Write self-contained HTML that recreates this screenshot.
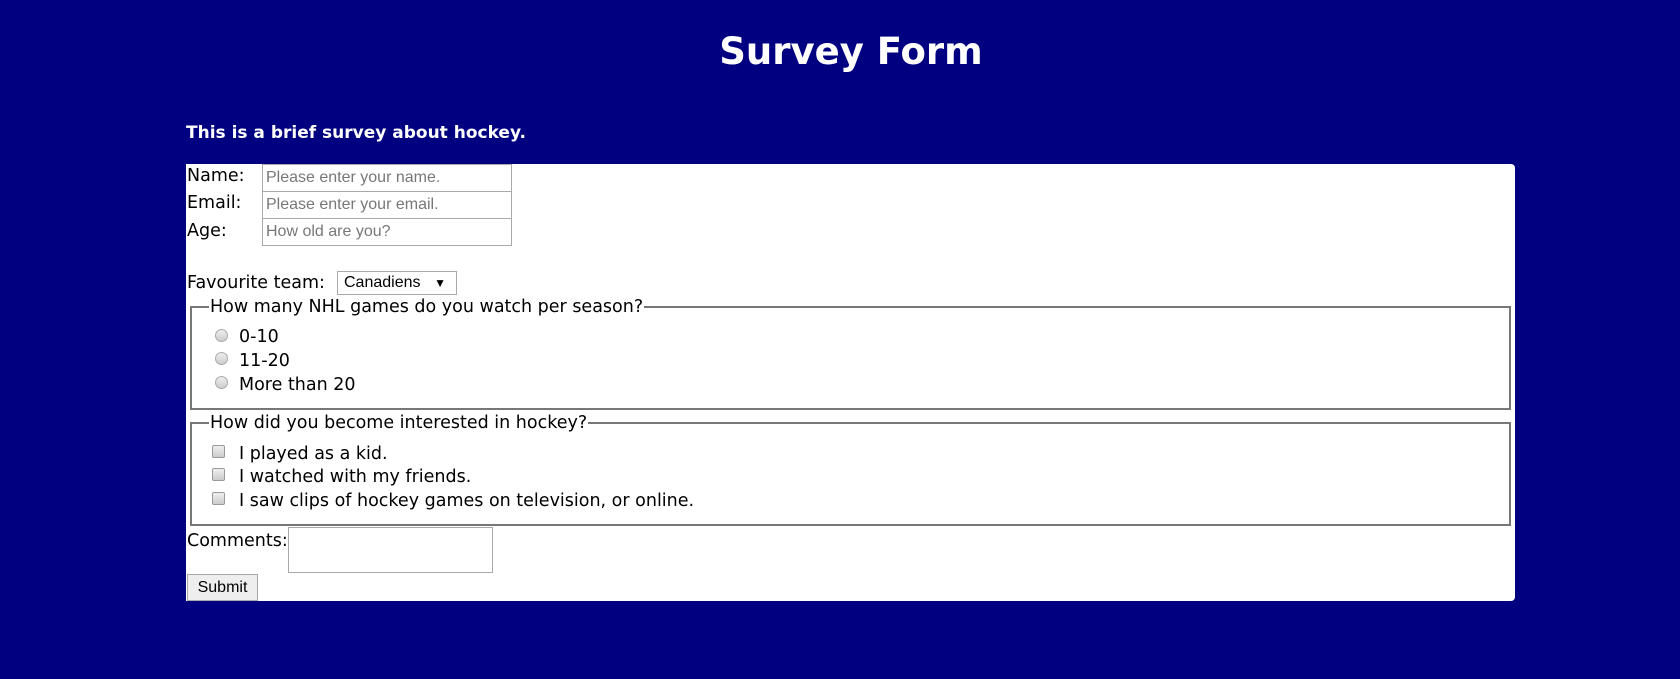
<!DOCTYPE html>
<html><head><style>
body{margin:0;background:#000080;width:1680px;height:679px;position:relative;overflow:hidden;font-family:"DejaVu Sans","Liberation Sans",sans-serif;}
.a{position:absolute;white-space:nowrap;}
h1{position:absolute;left:0;width:1702px;text-align:center;top:30px;margin:0;color:#fff;font-size:37px;font-weight:bold;}
.t{font-size:17.5px;color:#000;}
.inp{position:absolute;border:1px solid #a9a9a9;background:#fff;font-family:"Liberation Sans",sans-serif;font-size:16px;color:#777;box-sizing:border-box;padding:4px 3px;}
.fs{position:absolute;border:2px solid #777;box-sizing:border-box;}
.rad{position:absolute;width:13px;height:13px;border-radius:50%;border:1px solid #aaa;background:linear-gradient(#eee,#ccc);box-sizing:border-box;}
.chk{position:absolute;width:13px;height:13px;border-radius:2px;border:1px solid #999;background:linear-gradient(#eee,#ccc);box-sizing:border-box;}
.leg{position:absolute;background:#fff;padding:0 1px;}
</style></head><body>
<h1>Survey Form</h1>
<div class="a" style="left:186px;top:123px;color:#fff;font-size:17px;font-weight:bold;">This is a brief survey about hockey.</div>
<div class="a" style="left:186px;top:164px;width:1329px;height:437px;background:#fff;border-radius:0 4px 4px 0;"></div>
<div class="a t" style="left:187px;top:166px">Name:</div>
<div class="a t" style="left:187px;top:193px">Email:</div>
<div class="a t" style="left:187px;top:221px">Age:</div>
<div class="inp" style="left:262px;top:164px;width:250px;height:28px">Please enter your name.</div>
<div class="inp" style="left:262px;top:191px;width:250px;height:28px">Please enter your email.</div>
<div class="inp" style="left:262px;top:218px;width:250px;height:28px">How old are you?</div>
<div class="a t" style="left:187px;top:273px">Favourite team:</div>
<div class="inp" style="left:337px;top:271px;width:120px;height:24px;color:#000;padding:2px 6px">Canadiens<span style="position:absolute;right:10px;top:4px;font-size:12px">▼</span></div>
<div class="fs" style="left:190px;top:306px;width:1321px;height:104px"></div>
<div class="a t leg" style="left:209px;top:297px">How many NHL games do you watch per season?</div>
<div class="rad" style="left:215px;top:329px"></div><div class="a t" style="left:239px;top:327px">0-10</div>
<div class="rad" style="left:215px;top:352px"></div><div class="a t" style="left:239px;top:351px">11-20</div>
<div class="rad" style="left:215px;top:376px"></div><div class="a t" style="left:239px;top:375px">More than 20</div>
<div class="fs" style="left:190px;top:422px;width:1321px;height:104px"></div>
<div class="a t leg" style="left:209px;top:413px">How did you become interested in hockey?</div>
<div class="chk" style="left:212px;top:445px"></div><div class="a t" style="left:239px;top:444px">I played as a kid.</div>
<div class="chk" style="left:212px;top:468px"></div><div class="a t" style="left:239px;top:467px">I watched with my friends.</div>
<div class="chk" style="left:212px;top:492px"></div><div class="a t" style="left:239px;top:491px">I saw clips of hockey games on television, or online.</div>
<div class="a t" style="left:187px;top:531px">Comments:</div>
<div class="inp" style="left:288px;top:527px;width:205px;height:46px"></div>
<div class="inp" style="left:187px;top:574px;width:71px;height:27px;background:#eee;color:#000;text-align:center;padding:4px 0">Submit</div>
</body></html>
